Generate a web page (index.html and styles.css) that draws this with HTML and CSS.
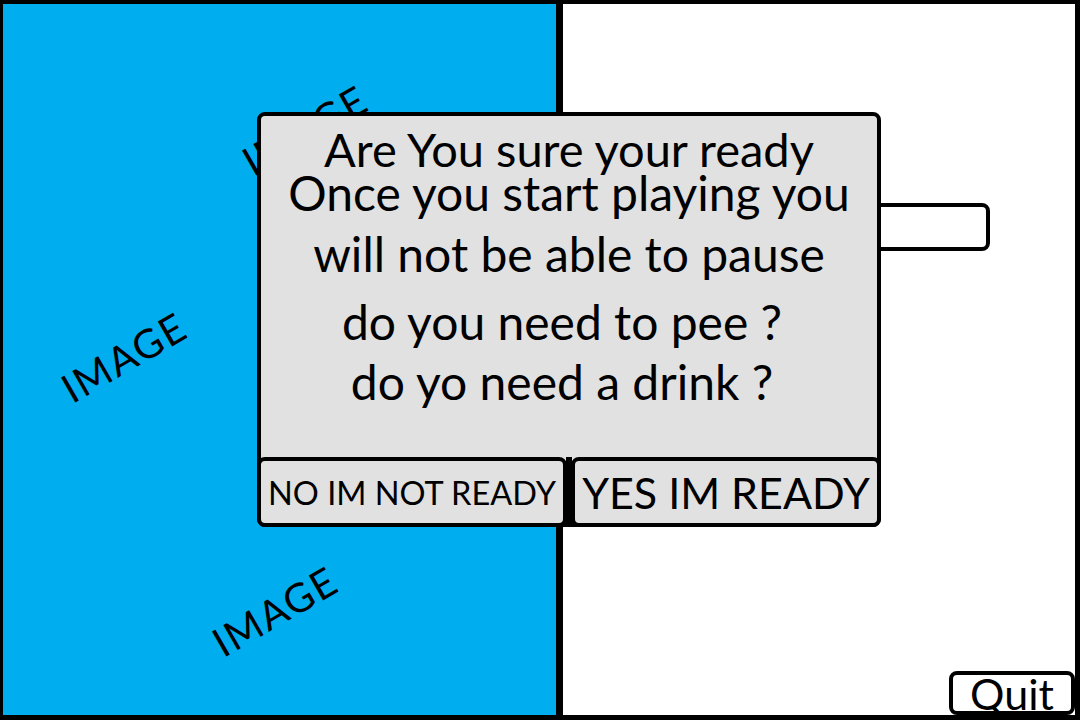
FILE: index.html
```html
<!DOCTYPE html>
<html lang="en">
<head>
    <meta charset="UTF-8">
    <meta name="viewport" content="width=device-width, initial-scale=1.0">
    <title>Ready?</title>
    <link rel="stylesheet" href="styles.css">
</head>
<body>
    <div class="screen">
        <div class="panel panel-images">
            <span class="placeholder ph-top">IMAGE</span>
            <span class="placeholder ph-mid">IMAGE</span>
            <span class="placeholder ph-low">IMAGE</span>
        </div>

        <div class="panel panel-main">
            <input class="name-input" type="text">
            <button class="quit" type="button">Quit</button>
        </div>

        <div class="dialog">
            <p class="line line-1">Are You sure your ready</p>
            <p class="line line-2">Once you start playing you</p>
            <p class="line line-3">will not be able to pause</p>
            <p class="line line-4">do you need to pee ?</p>
            <p class="line line-5">do yo need a drink ?</p>

            <div class="choices">
                <button class="choice choice-no" type="button">NO IM NOT READY</button>
                <button class="choice choice-yes" type="button">YES IM READY</button>
            </div>
        </div>
    </div>
</body>
</html>
```

FILE: styles.css
```css
body {
    margin: 0;
    font-family: Lato, "Open Sans", sans-serif;
    color: #000;
}

.screen {
    position: relative;
    display: flex;
    width: 1080px;
    height: 720px;
    box-sizing: border-box;
    border-style: solid;
    border-color: #000;
    border-width: 4px 5px 5px 3px;
}

.panel-images {
    position: relative;
    width: 553px;
    background-color: #00adee;
    border-right: 7px solid #000;
    overflow: hidden;
}

.placeholder {
    position: absolute;
    font-size: 40px;
    line-height: 1;
    letter-spacing: 2px;
    white-space: nowrap;
    transform: translate(-50%, -50%) rotate(-30deg);
}

.ph-top {
    left: 302px;
    top: 126px;
}

.ph-mid {
    left: 121px;
    top: 353px;
}

.ph-low {
    left: 272px;
    top: 607px;
}

.panel-main {
    flex: 1;
    display: flex;
    flex-direction: column;
    align-items: center;
    background-color: #fff;
}

.name-input {
    margin-top: 199px;
    width: 342px;
    height: 48px;
    box-sizing: border-box;
    border: 4px solid #000;
    border-radius: 8px;
    background: #fff;
}

.quit {
    margin-top: auto;
    align-self: flex-end;
    width: 126px;
    height: 44px;
    box-sizing: border-box;
    padding: 0;
    border: 4px solid #000;
    border-radius: 8px;
    background: #fff;
    font-family: inherit;
    font-size: 43px;
    line-height: 38px;
    color: #000;
}

.dialog {
    position: absolute;
    left: 254px;
    top: 108px;
    width: 624px;
    height: 415px;
    box-sizing: border-box;
    display: flex;
    flex-direction: column;
    padding-top: 12px;
    background-color: #e1e1e1;
    border: 4px solid #000;
    border-radius: 8px;
}

.line {
    margin: 0;
    text-align: center;
    font-size: 48px;
    line-height: 48px;
    white-space: nowrap;
}

.line-1 {
    font-size: 47px;
    line-height: 42px;
}

.line-2 {
    margin-top: 2px;
    line-height: 42px;
}

.line-3 {
    margin-top: 16px;
}

.line-4 {
    margin-top: 20px;
    padding-right: 14px;
}

.line-5 {
    margin-top: 12px;
    padding-right: 14px;
}

.choices {
    display: flex;
    gap: 4px;
    margin: auto -4px -4px;
    height: 70px;
    background: linear-gradient(#000, #000) center / 6px 100% no-repeat;
}

.choice {
    flex: 1 1 0;
    min-width: 0;
    padding: 0;
    border: 4px solid #000;
    border-radius: 8px;
    background-color: #e1e1e1;
    font-family: inherit;
    color: #000;
    white-space: nowrap;
}

.choice-no {
    font-size: 32.5px;
}

.choice-yes {
    font-size: 43px;
}
```
